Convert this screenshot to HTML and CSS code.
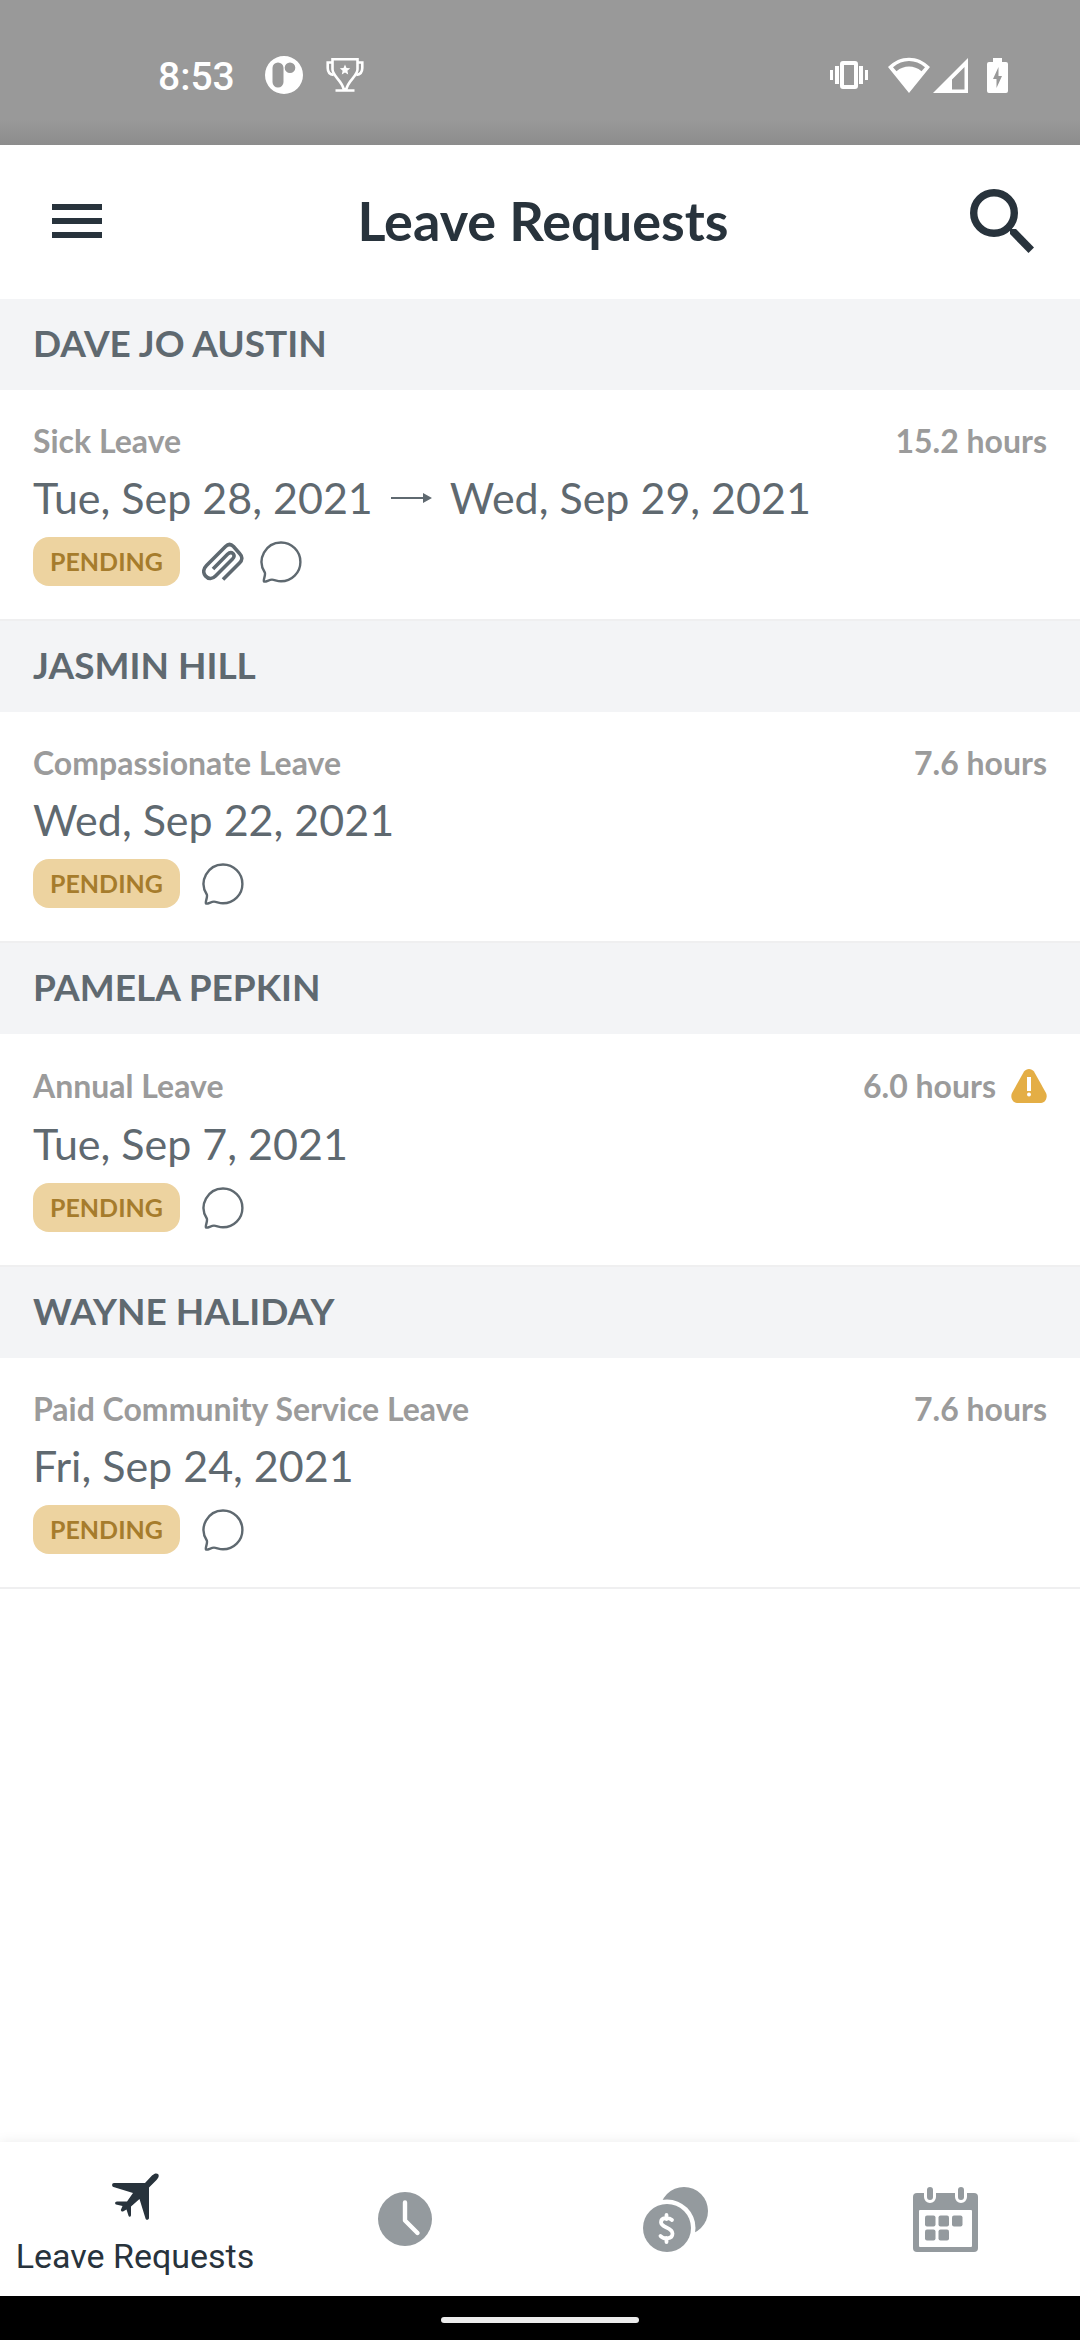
FILE: index.html
```html
<!DOCTYPE html>
<html lang="en">
<head>
    <meta charset="utf-8">
    <meta name="viewport" content="width=device-width, initial-scale=1">
    <title>Leave Requests</title>
    <link rel="stylesheet" href="styles.css">
</head>
<body>
    <!-- Shared icons -->
    <svg class="sprite" aria-hidden="true">
        <symbol id="icon-chat" viewBox="0 0 42 42">
            <path d="M21 1.500A19.400 19.400 0 1 1 21 40.300C17 40.300 14.500 38.600 12 38.600C9 38.600 5.500 41.500 4 40.500C2.800 39.500 6 34 4.800 31.500A19.400 19.400 0 0 1 21 1.500z" fill="none" stroke="currentColor" stroke-width="2.400"/>
        </symbol>
        <symbol id="icon-clip" viewBox="0 0 42 42">
            <path d="M21 38.500L37.500 22C40.500 19 40.500 15.500 38 13L31.500 5.500C29 3 26 3 23.500 5.500L4.500 24.500C1 28 1 32 3.500 35C6.500 38.500 10.500 38 13.500 35L30.500 18C32.500 16 32.500 14 31 12.500C29.300 11 27.300 11.500 25.500 13.300L11 28" fill="none" stroke="currentColor" stroke-width="3.600"/>
        </symbol>
    </svg>

    <div class="status-bar">
        <span class="time">8:53</span>
        <svg class="icon-app" viewBox="0 0 38 38">
            <path fill="#fff" fill-rule="evenodd" d="M19 0a19 19 0 1 0 0 38a19 19 0 1 0 0-38zM13 6.500a5.500 5.500 0 0 1 5.500 5.500v14a5.500 5.500 0 0 1-11 0V12A5.500 5.500 0 0 1 13 6.500zM25 6.500a5.300 5.300 0 1 1 0 10.600a5.300 5.300 0 1 1 0-10.600z"/>
        </svg>
        <svg class="icon-trophy" viewBox="0 0 38 36">
            <g fill="none" stroke="#fff" stroke-width="2.600">
                <path d="M6.500 2.300h25v10c0 7-9.500 11-11.200 20h-2.600C16 23.300 6.500 19.300 6.500 12.300z"/>
                <path d="M6.500 5.500H1.700V11c0 4 2 6.500 6 7M31.500 5.500h4.800V11c0 4-2 6.500-6 7M9.500 33.500h19"/>
            </g>
            <path fill="#fff" d="M19 7.500l1.500 3.400 3.700.4-2.800 2.500.8 3.700-3.200-1.900-3.200 1.900.8-3.700-2.800-2.500 3.700-.4z"/>
        </svg>
        <div class="status-right">
            <svg class="icon-vibrate" viewBox="0 0 38 28">
                <path fill="#fff" d="M0 9h3v10H0zM5 5h4v18H5zM29 5h4v18h-4zM35 9h3v10h-3z"/>
                <rect x="12" y="2" width="14" height="24" rx="1" fill="none" stroke="#fff" stroke-width="4"/>
            </svg>
            <svg class="icon-wifi" viewBox="0 0 42 36">
                <path fill="#fff" fill-rule="evenodd" d="M0 10C12-2.500 30-2.500 42 10L21 36zM5 10.200l3.500 4C16 8 26 8 33.500 14.200l3.500-4C27.500 2 14.500 2 5 10.200z"/>
            </svg>
            <svg class="icon-signal" viewBox="0 0 35 35">
                <path fill="#fff" fill-rule="evenodd" d="M35 0v35H0zM31.500 9L19 21.500V31.500h12.500z"/>
            </svg>
            <svg class="icon-battery" viewBox="0 0 21 35">
                <path fill="#fff" fill-rule="evenodd" d="M6 0h9v4h4a2 2 0 0 1 2 2v27a2 2 0 0 1-2 2H2a2 2 0 0 1-2-2V6a2 2 0 0 1 2-2h4zM11.500 9L6 21h3.500v9L15 18h-3.500z"/>
            </svg>
        </div>
    </div>

    <header class="app-bar">
        <button type="button" class="icon-button" aria-label="Menu">
            <svg class="icon-menu" viewBox="0 0 50 34"><path fill="currentColor" d="M0 0h50v6H0zM0 14h50v6H0zM0 28h50v6H0z"/></svg>
        </button>
        <h1>Leave Requests</h1>
        <button type="button" class="icon-button" aria-label="Search">
            <svg class="icon-search" viewBox="0 0 64 64">
                <circle cx="24" cy="24" r="20.300" fill="none" stroke="currentColor" stroke-width="7.400"/>
                <path fill="currentColor" d="M40 45v-5h6L64 58.500 58.500 64z"/>
            </svg>
        </button>
    </header>

    <main class="requests">
        <section>
            <h2>DAVE JO AUSTIN</h2>
            <div class="request">
                <div class="meta"><span>Sick Leave</span><span class="hours">15.2 hours</span></div>
                <div class="dates">
                    <span>Tue, Sep 28, 2021</span>
                    <svg class="icon-arrow" viewBox="0 0 41 12"><path fill="currentColor" d="M0 5h32V1l9 5-9 5V7H0z"/></svg>
                    <span>Wed, Sep 29, 2021</span>
                </div>
                <div class="tags">
                    <span class="badge">PENDING</span>
                    <svg class="icon-tag"><use href="#icon-clip"/></svg>
                    <svg class="icon-tag"><use href="#icon-chat"/></svg>
                </div>
            </div>
        </section>

        <section>
            <h2>JASMIN HILL</h2>
            <div class="request">
                <div class="meta"><span>Compassionate Leave</span><span class="hours">7.6 hours</span></div>
                <div class="dates"><span>Wed, Sep 22, 2021</span></div>
                <div class="tags">
                    <span class="badge">PENDING</span>
                    <svg class="icon-tag"><use href="#icon-chat"/></svg>
                </div>
            </div>
        </section>

        <section>
            <h2>PAMELA PEPKIN</h2>
            <div class="request">
                <div class="meta">
                    <span>Annual Leave</span>
                    <span class="hours">6.0 hours
                        <svg class="icon-warning" viewBox="0 0 36 38">
                            <path fill="#e4ae45" d="M13 4.500C15.500 1 20.500 1 23 4.500L35 26c2 4-.5 10-5 10H6c-4.500 0-7-6-5-10z"/>
                            <path fill="#fff" d="M16 10h4v14h-4z"/>
                            <circle cx="18" cy="27.500" r="2" fill="#fff"/>
                        </svg>
                    </span>
                </div>
                <div class="dates"><span>Tue, Sep 7, 2021</span></div>
                <div class="tags">
                    <span class="badge">PENDING</span>
                    <svg class="icon-tag"><use href="#icon-chat"/></svg>
                </div>
            </div>
        </section>

        <section>
            <h2>WAYNE HALIDAY</h2>
            <div class="request">
                <div class="meta"><span>Paid Community Service Leave</span><span class="hours">7.6 hours</span></div>
                <div class="dates"><span>Fri, Sep 24, 2021</span></div>
                <div class="tags">
                    <span class="badge">PENDING</span>
                    <svg class="icon-tag"><use href="#icon-chat"/></svg>
                </div>
            </div>
        </section>
    </main>

    <nav class="tab-bar">
        <a href="#leave" class="tab active">
            <svg class="icon-plane" viewBox="0 0 47 47">
                <path fill="currentColor" d="M33 10L40 2.500C42.500 0 45 0 46 1c1.200 1.200 1 3.500-1.500 6L37 14.500V45c0 2-3 2.500-3.500.5L27.500 26 19 33.500V42c0 2-2 2.500-2.500.8L14.500 36.500 11 38.500c-1.500.5-2.500-1-2-2L10.500 33 4 31.500c-1.500-.5-1-3 1-3h10L21 20 1.500 14C-.5 13.300-.3 10 2 10z"/>
            </svg>
            <span>Leave Requests</span>
        </a>
        <a href="#timesheets" class="tab" aria-label="Timesheets">
            <svg class="icon-clock" viewBox="0 0 54 54">
                <circle cx="27" cy="27" r="27" fill="currentColor"/>
                <path d="M27 10.500V28.500L39.500 41" fill="none" stroke="#fff" stroke-width="4.400" stroke-linecap="round" stroke-linejoin="round"/>
            </svg>
        </a>
        <a href="#pay" class="tab" aria-label="Pay">
            <svg class="icon-large" viewBox="0 0 65 65">
                <circle cx="41" cy="24" r="24" fill="currentColor"/>
                <circle cx="24" cy="41" r="28.500" fill="#fff"/>
                <circle cx="24" cy="41" r="24" fill="currentColor"/>
                <path d="M29 33c-3-2.500-11-3-11 2.300C18 41 29.500 40 29.500 46.500c0 6-9 6-12 2.500M23.500 28v4M23.500 51v4" fill="none" stroke="#fff" stroke-width="3.800" stroke-linecap="round"/>
            </svg>
        </a>
        <a href="#calendar" class="tab" aria-label="Calendar">
            <svg class="icon-large" viewBox="0 0 65 65">
                <rect x="0" y="6" width="65" height="59" rx="4" fill="currentColor"/>
                <rect x="6" y="23" width="53" height="37" rx="1" fill="#fff"/>
                <path d="M17 4v6M48 4v6" stroke="#fff" stroke-width="12" stroke-linecap="round"/>
                <path d="M17 3v7M48 3v7" stroke="currentColor" stroke-width="6" stroke-linecap="round"/>
                <g fill="currentColor">
                    <rect x="12" y="28.500" width="10.500" height="11" rx="2"/>
                    <rect x="25.500" y="28.500" width="10.500" height="11" rx="2"/>
                    <rect x="39" y="28.500" width="10.500" height="11" rx="2"/>
                    <rect x="12" y="42.500" width="10.500" height="11" rx="2"/>
                    <rect x="25.500" y="42.500" width="10.500" height="11" rx="2"/>
                </g>
            </svg>
        </a>
    </nav>
    <div class="gesture-bar"><div class="gesture-handle"></div></div>
</body>
</html>
```

FILE: styles.css
```css
* {
    box-sizing: border-box;
}

body {
    margin: 0;
    min-height: 100vh;
    display: flex;
    flex-direction: column;
    background-color: #fff;
    color: #5f6970;
    font-family: Lato, sans-serif;
}

svg {
    display: block;
    flex: none;
}

.sprite {
    position: absolute;
    width: 0;
    height: 0;
}

/* Status bar */
.status-bar {
    height: 145px;
    padding: 5px 72px 0 158px;
    display: flex;
    align-items: center;
    background: linear-gradient(#999 120px, #8c8c8c);
    color: #fff;
}

.time {
    padding-top: 4px;
    font-family: Roboto, sans-serif;
    font-size: 39px;
    line-height: 44px;
    font-weight: 500;
    margin-right: 30px;
}

.icon-app {
    width: 38px;
    height: 38px;
    margin-right: 23px;
}

.icon-trophy {
    width: 38px;
    height: 36px;
}

.status-right {
    margin-left: auto;
    display: flex;
    align-items: center;
}

.icon-vibrate {
    width: 38px;
    height: 28px;
    margin-right: 20px;
}

.icon-wifi {
    width: 42px;
    height: 36px;
    margin-right: 3px;
}

.icon-signal {
    width: 35px;
    height: 35px;
    margin-right: 19px;
}

.icon-battery {
    width: 21px;
    height: 35px;
}

/* Header */
.app-bar {
    height: 154px;
    padding: 0 46px 2px 52px;
    display: flex;
    align-items: center;
    justify-content: space-between;
    color: #28333c;
}

.app-bar h1 {
    margin: 0;
    font-size: 54px;
    line-height: 62px;
    font-weight: 700;
}

.icon-button {
    width: 64px;
    padding: 0;
    border: 0;
    background: none;
    color: inherit;
}

.icon-menu {
    width: 50px;
    height: 34px;
}

.icon-search {
    width: 64px;
    height: 64px;
}

/* Request list */
.requests {
    flex: 1;
}

.requests h2 {
    margin: 0;
    padding: 22px 33px 25px;
    background-color: #f3f4f6;
    font-size: 37px;
    line-height: 44px;
    font-weight: 700;
}

.request {
    display: flex;
    flex-direction: column;
    gap: 14px;
    padding: 33px;
    border-bottom: 2px solid #efeff0;
}

.meta {
    display: flex;
    align-items: center;
    justify-content: space-between;
    color: #9b9b9b;
    font-size: 32px;
    line-height: 36px;
    font-weight: 700;
}

.hours {
    display: flex;
    align-items: center;
    gap: 15px;
}

.dates {
    display: flex;
    align-items: center;
    gap: 18px;
    font-size: 43px;
    line-height: 50px;
}

.icon-arrow {
    width: 41px;
    height: 12px;
}

.tags {
    display: flex;
    align-items: center;
    gap: 16px;
}

.badge {
    margin-right: 6px;
    padding: 0 17px;
    border-radius: 16px;
    background-color: #edd3a0;
    color: #a67c2c;
    font-size: 25px;
    line-height: 49px;
    font-weight: 700;
}

.icon-tag {
    width: 42px;
    height: 42px;
}

.icon-warning {
    width: 36px;
    height: 38px;
}

/* Bottom navigation */
.tab-bar {
    height: 154px;
    display: grid;
    grid-template-columns: repeat(4, 1fr);
    box-shadow: 0 0 12px rgba(0, 0, 0, 0.08);
}

.tab {
    display: flex;
    flex-direction: column;
    align-items: center;
    justify-content: center;
    gap: 16px;
    color: #949a9e;
    font-family: Roboto, sans-serif;
    font-size: 34px;
    line-height: 40px;
    text-decoration: none;
    white-space: nowrap;
}

.tab.active {
    padding-top: 10px;
    color: #28333c;
}

.icon-plane {
    width: 47px;
    height: 47px;
}

.icon-clock {
    width: 54px;
    height: 54px;
}

.icon-large {
    width: 65px;
    height: 65px;
}

.gesture-bar {
    height: 44px;
    padding-top: 4px;
    display: flex;
    align-items: center;
    justify-content: center;
    background-color: #000;
}

.gesture-handle {
    width: 198px;
    height: 6px;
    border-radius: 3px;
    background-color: #ebebeb;
}
```
